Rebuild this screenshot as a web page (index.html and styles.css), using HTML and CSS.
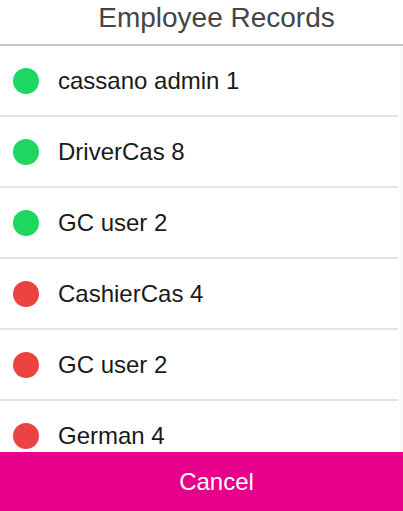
FILE: index.html
```html
<!DOCTYPE html>
<html>
<head>
<meta charset="utf-8">
<link rel="stylesheet" href="styles.css">
</head>
<body>
<div class="dialog">
  <div class="header"><span class="title">Employee Records</span></div>
  <div class="body">
    <ul class="list">
      <li class="row"><span class="dot on"></span><span class="name">cassano admin 1</span></li>
      <li class="row"><span class="dot on"></span><span class="name">DriverCas 8</span></li>
      <li class="row"><span class="dot on"></span><span class="name">GC user 2</span></li>
      <li class="row"><span class="dot off"></span><span class="name">CashierCas 4</span></li>
      <li class="row"><span class="dot off"></span><span class="name">GC user 2</span></li>
      <li class="row"><span class="dot off"></span><span class="name">German 4</span></li>
    </ul>
    <div class="scroll"></div>
  </div>
  <button class="cancel">Cancel</button>
</div>
</body>
</html>
```
FILE: styles.css
```css
html, body {
  margin: 0;
  padding: 0;
  background: #fff;
}
.dialog {
  width: 403px;
  height: 511px;
  display: flex;
  flex-direction: column;
  font-family: "Liberation Sans", Arial, sans-serif;
  overflow: hidden;
}
.header {
  height: 44px;
  border-bottom: 2px solid #c4c4c4;
  display: flex;
  align-items: center;
  justify-content: center;
  padding-left: 30px;
  box-sizing: content-box;
  flex: none;
}
.title {
  font-size: 28px;
  color: #454545;
  margin-top: -8px;
}
.body {
  flex: 1;
  display: flex;
  overflow: hidden;
}
.list {
  list-style: none;
  margin: 0;
  padding: 0;
  flex: 1;
  overflow: hidden;
}
.row {
  height: 69px;
  border-bottom: 2px solid #e4e4e4;
  display: flex;
  align-items: center;
  padding-left: 13px;
  gap: 19px;
}
.dot {
  width: 26px;
  height: 26px;
  border-radius: 50%;
  flex: none;
}
.dot.on { background: #1ed760; }
.dot.off { background: #ec4242; }
.name {
  font-size: 24px;
  color: #1a1a1a;
}
.scroll {
  width: 5px;
  flex: none;
  background: #f8f8f8;
  border-left: 2px solid #fff;
  box-sizing: border-box;
}
.cancel {
  flex: none;
  height: 59px;
  border: none;
  margin: 0;
  background: #e6008b;
  color: #fff;
  font-family: "Liberation Sans", Arial, sans-serif;
  font-size: 24px;
  padding: 0 0 0 30px;
  width: 100%;
}
```
